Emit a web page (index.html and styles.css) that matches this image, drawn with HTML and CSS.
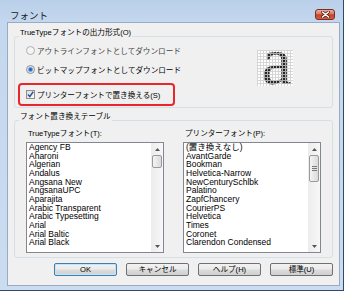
FILE: index.html
```html
<!DOCTYPE html>
<html lang="ja">
<head>
    <meta charset="utf-8">
    <title>フォント</title>
    <link rel="stylesheet" href="styles.css">
</head>
<body>
    <div class="window">

        <div class="titlebar">
            <span class="title">フォント</span>
            <button type="button" class="close-btn" aria-label="閉じる">
                <svg width="9" height="7" viewBox="0 0 9 7">
                    <path d="M1.5 1 L7.5 6 M7.5 1 L1.5 6" stroke="#5b1c12" stroke-width="3" stroke-linecap="round"/>
                    <path d="M1.5 1 L7.5 6 M7.5 1 L1.5 6" stroke="#fff" stroke-width="1.6" stroke-linecap="round"/>
                </svg>
            </button>
        </div>

        <div class="client">

            <fieldset class="group">
                <legend>TrueTypeフォントの出力形式(O)</legend>
                <div class="output-body">
                    <div class="options">
                        <label class="option disabled"><span class="radio"></span>アウトラインフォントとしてダウンロード</label>
                        <label class="option"><span class="radio checked"></span>ビットマップフォントとしてダウンロード</label>
                        <label class="option highlight">
                            <span class="checkbox">
                                <svg width="7" height="7" viewBox="0 0 7 7">
                                    <path d="M1 3.6 L2.8 5.6 L6.2 0.8" fill="none" stroke="#2f4f98" stroke-width="1.5"/>
                                </svg>
                            </span>プリンターフォントで置き換える(S)
                        </label>
                    </div>
                    <div class="preview"><span class="glyph">a</span></div>
                </div>
            </fieldset>

            <fieldset class="group group-table">
                <legend>フォント置き換えテーブル</legend>
                <div class="table-body">

                    <div class="column">
                        <div class="column-label">TrueTypeフォント(T):</div>
                        <div class="listbox">
                            <ul>
                                <li>Agency FB</li>
                                <li>Aharoni</li>
                                <li>Algerian</li>
                                <li>Andalus</li>
                                <li>Angsana New</li>
                                <li>AngsanaUPC</li>
                                <li>Aparajita</li>
                                <li>Arabic Transparent</li>
                                <li>Arabic Typesetting</li>
                                <li>Arial</li>
                                <li>Arial Baltic</li>
                                <li>Arial Black</li>
                            </ul>
                            <div class="scrollbar">
                                <div class="arrow"><svg width="5" height="3" viewBox="0 0 5 3"><path d="M0 3 L2.5 0 L5 3 Z" fill="#555"/></svg></div>
                                <div class="track"><div class="thumb"></div></div>
                                <div class="arrow"><svg width="5" height="3" viewBox="0 0 5 3"><path d="M0 0 L5 0 L2.5 3 Z" fill="#555"/></svg></div>
                            </div>
                        </div>
                    </div>

                    <div class="column">
                        <div class="column-label">プリンターフォント(P):</div>
                        <div class="listbox">
                            <ul>
                                <li>(置き換えなし)</li>
                                <li>AvantGarde</li>
                                <li>Bookman</li>
                                <li>Helvetica-Narrow</li>
                                <li>NewCenturySchlbk</li>
                                <li>Palatino</li>
                                <li>ZapfChancery</li>
                                <li>CourierPS</li>
                                <li>Helvetica</li>
                                <li>Times</li>
                                <li>Coronet</li>
                                <li>Clarendon Condensed</li>
                            </ul>
                            <div class="scrollbar">
                                <div class="arrow"><svg width="5" height="3" viewBox="0 0 5 3"><path d="M0 3 L2.5 0 L5 3 Z" fill="#555"/></svg></div>
                                <div class="track"><div class="thumb thumb-long"><span class="grip"></span></div></div>
                                <div class="arrow"><svg width="5" height="3" viewBox="0 0 5 3"><path d="M0 0 L5 0 L2.5 3 Z" fill="#555"/></svg></div>
                            </div>
                        </div>
                    </div>

                </div>
            </fieldset>

            <div class="buttons">
                <button type="button" class="btn btn-default">OK</button>
                <button type="button" class="btn">キャンセル</button>
                <button type="button" class="btn">ヘルプ(H)</button>
                <button type="button" class="btn">標準(U)</button>
            </div>

        </div>
    </div>
</body>
</html>
```

FILE: styles.css
```css
* {
    box-sizing: border-box;
}

body {
    margin: 0;
    background-color: #FFFFFF;
    color: #000000;
    font-family: "Liberation Sans", "Noto Sans CJK JP", sans-serif;
    font-size: 7.6px;
}

/* window frame */
.window {
    width: 344px;
    height: 291px;
    display: flex;
    flex-direction: column;
    padding: 0 3px 4px 7px;
    background: linear-gradient(180deg, #bad0ea 0, #c3d7ee 22px, #cbdcf0 100%);
    border-right: 1px solid #30496a;
    border-bottom: 1px solid #30496a;
}

.titlebar {
    height: 22px;
    display: flex;
    align-items: center;
    justify-content: space-between;
    padding: 7px 5px 0 3px;
}

.title {
    font-family: "Noto Sans CJK JP", sans-serif;
    font-size: 9.5px;
    color: #1c1c1c;
}

.close-btn {
    width: 20px;
    height: 11px;
    padding: 0;
    display: flex;
    align-items: center;
    justify-content: center;
    border: 1px solid #7a2d24;
    border-radius: 3px;
    background: linear-gradient(180deg, #eab0a2 0%, #d9785f 45%, #c4432a 52%, #d55c3e 100%);
}

.client {
    flex: 1;
    display: flex;
    flex-direction: column;
    padding: 5px 6px 0 6px;
    background-color: #F0F0F0;
    border: 1px solid #98abc3;
}

/* group boxes */
.group {
    margin: 0;
    padding: 0;
    min-width: 0;
    border: 1px solid #d5dfe5;
    border-radius: 3px;
}

.group legend {
    margin-left: 4px;
    padding: 0 1px 6px;
    line-height: 10px;
}

.output-body {
    display: flex;
    justify-content: space-between;
    padding: 0 39px 1px 3px;
}

.options {
    display: flex;
    flex-direction: column;
}

.option {
    display: flex;
    align-items: center;
    gap: 2px;
    height: 12px;
    padding-left: 8px;
}

.option + .option {
    margin-top: 7px;
}

.option.disabled {
    color: #444444;
}

.option.highlight {
    width: 157px;
    height: 23px;
    margin-top: 8px;
    padding-left: 6px;
    border: 2px solid #e8262b;
    border-radius: 4px;
}

.radio {
    width: 9px;
    height: 9px;
    border-radius: 50%;
    border: 1px solid #8e8f8f;
    background: radial-gradient(circle at 40% 40%, #ffffff, #dcdcdc);
}

.option.disabled .radio {
    border-color: #b0b0b0;
    background: #f4f4f4;
}

.radio.checked {
    background: radial-gradient(circle, #1c4f9e 0, #3f83d6 1.6px, #bcd5f2 2.6px, #f6f6f6 3.6px);
}

.checkbox {
    width: 9px;
    height: 9px;
    display: flex;
    align-items: center;
    justify-content: center;
    border: 1px solid #8e8f8f;
    background: linear-gradient(135deg, #dcdcdc, #fbfbfb);
}

/* bitmap font sample */
.preview {
    width: 36px;
    height: 36px;
    margin-top: 6px;
    padding-left: 3px;
    background-color: #FFFFFF;
    background-image: linear-gradient(90deg, #d6d6d6 1px, transparent 1px), linear-gradient(#d6d6d6 1px, transparent 1px);
    background-size: 3px 3px;
    font-family: "Liberation Serif", serif;
    font-size: 68px;
    line-height: 22px;
    text-align: center;
}

.glyph {
    color: transparent;
    background-color: #262626;
    background-image: linear-gradient(90deg, #aaaaaa 1px, transparent 1px), linear-gradient(#aaaaaa 1px, transparent 1px);
    background-size: 3px 3px;
    -webkit-background-clip: text;
    background-clip: text;
}

/* font substitution table */
.group-table {
    margin-top: 4px;
}

.table-body {
    display: grid;
    grid-template-columns: 138px 138px;
    column-gap: 19px;
    padding: 1px 12px 4px 11px;
}

.column-label {
    line-height: 10px;
    margin-bottom: 3px;
    padding-left: 2px;
}

.listbox {
    height: 111px;
    display: flex;
    border: 1px solid #828790;
    background-color: #FFFFFF;
}

.listbox ul {
    flex: 1;
    margin: 0;
    padding: 0 0 0 2px;
    list-style: none;
    font-size: 8.5px;
    line-height: 8.65px;
    overflow: hidden;
    white-space: nowrap;
}

.scrollbar {
    width: 12px;
    display: flex;
    flex-direction: column;
    background: linear-gradient(90deg, #ececec, #f7f7f7);
}

.arrow {
    height: 12px;
    display: flex;
    align-items: center;
    justify-content: center;
}

.track {
    flex: 1;
    padding: 0 1px;
}

.thumb {
    height: 13px;
    border: 1px solid #9a9a9a;
    border-radius: 2px;
    background: linear-gradient(90deg, #f4f4f4, #dadada);
}

.thumb-long {
    height: 27px;
    display: flex;
    align-items: center;
    justify-content: center;
}

.grip {
    width: 5px;
    height: 5px;
    border-top: 1px solid #777;
    border-bottom: 1px solid #777;
    background: linear-gradient(#777, #777) center / 100% 1px no-repeat;
}

/* dialog buttons */
.buttons {
    display: flex;
    justify-content: flex-end;
    gap: 9px;
    margin-top: 5px;
}

.btn {
    width: 63px;
    height: 13px;
    padding: 0;
    font: inherit;
    line-height: 11px;
    color: #000000;
    border: 1px solid #707070;
    border-radius: 2px;
    background: linear-gradient(180deg, #f2f2f2 0%, #ebebeb 48%, #dddddd 52%, #cfcfcf 100%);
}

.btn-default {
    border-color: #3c7fb1;
    box-shadow: inset 0 0 0 1px #c4e4f7;
}
```
